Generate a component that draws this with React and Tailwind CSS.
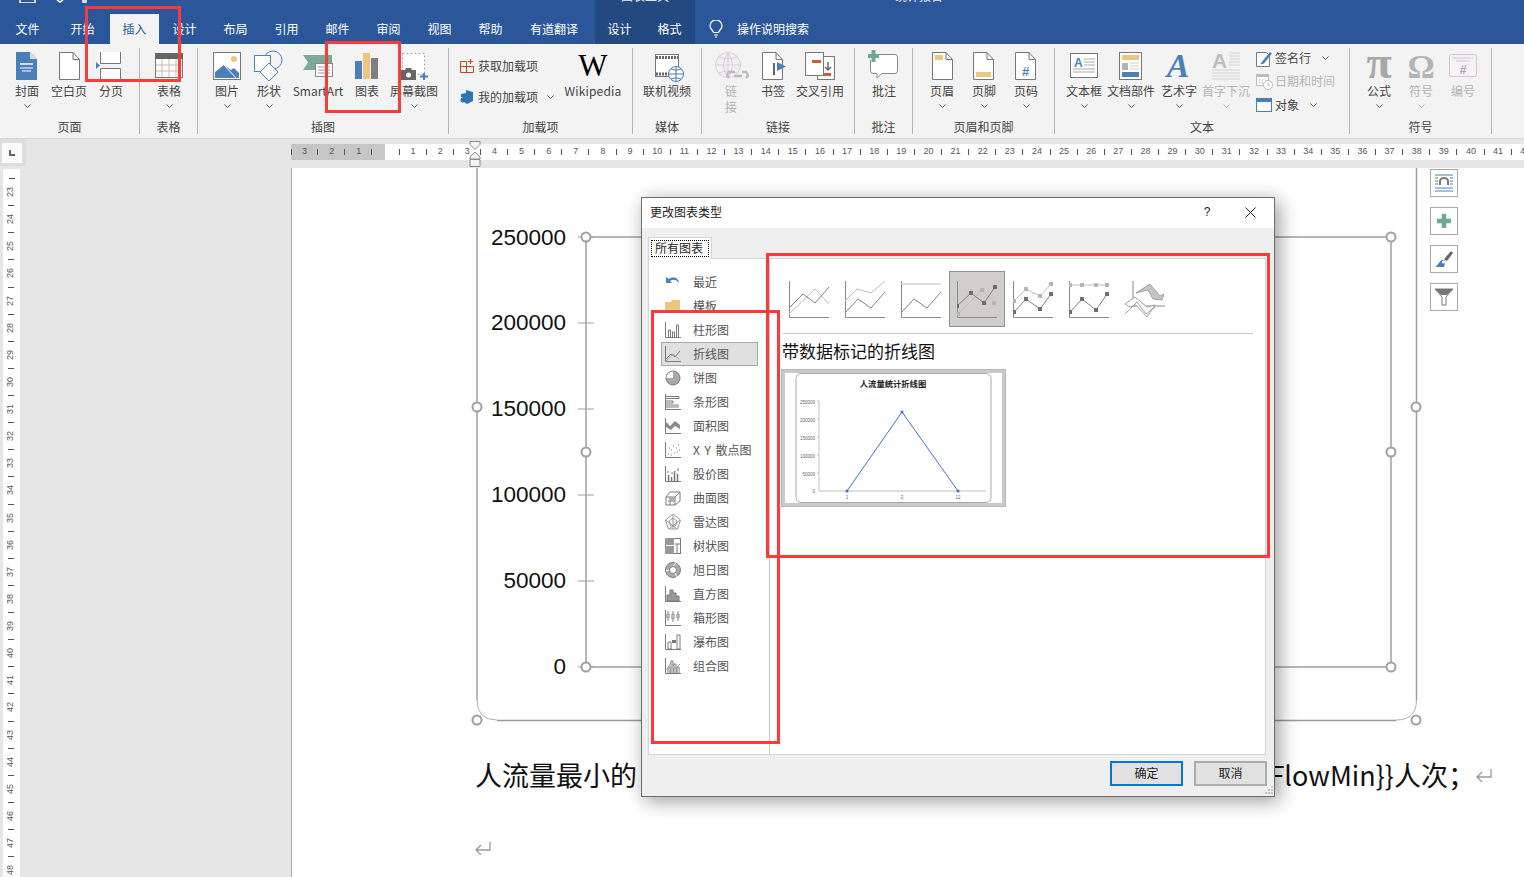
import React from 'react';

const BLUE = '#4a7fb8';
const YEL = '#ebc77f';
const RED = '#d9533a';
const GRN = '#6fa98f';

const Chev = ({ off }) => (
  <svg width="7" height="4" viewBox="0 0 7 4" className="shrink-0">
    <path d="M.5.5l3 3 3-3" fill="none" stroke={off ? '#bbb' : '#555'} strokeWidth="1" />
  </svg>
);

const Btn = ({ w, vb, label, off, chev, children }) => (
  <div className={`${w} flex flex-col items-center pt-px shrink-0`}>
    <svg viewBox={vb} className="w-full h-[34px] overflow-visible">{children}</svg>
    <div className={`text-center leading-[16px] whitespace-nowrap ${off ? 'text-[#b4b4b4]' : 'text-[#444]'}`}>{label}</div>
    {chev && <div className="h-[14px] flex items-center"><Chev off={off} /></div>}
  </div>
);

const Group = ({ w, pl, label, children }) => (
  <div className={`${w} h-[86px] flex flex-col border-r border-[#b5b5b5] shrink-0`}>
    <div className={`flex flex-1 ${pl}`}>{children}</div>
    <div className="h-[14px] leading-[14px] text-center text-[#444] whitespace-nowrap">{label}</div>
  </div>
);

const Doc = ({ x, w = 21 }) => (
  <path d={`M${x + .5} 52.5H${x + w - 7}L${x + w - .5} 59.5V79.5H${x + .5}ZM${x + w - 7} 52.5V59.5H${x + w - .5}`} fill="#fff" stroke="#777" />
);

const Ribbon = () => (
  <div className="h-[95px] pt-[4px] bg-[#f3f3f3] border-b border-[#d6d6d6] flex text-[12px]">
    <Group w="w-[140px]" pl="pl-[6px]" label="页面">
      <Btn w="w-[42px]" vb="6 49 42 34" label="封面" chev>
        <path d="M16 52H30L37 59V80H16Z" fill={BLUE} />
        <path d="M30 52V59H37Z" fill="#cfe0f0" />
        <path d="M20 63h13v2H20z" fill="#cfdcea" />
        <path d="M20 68h13M22 71h9" stroke="#fff" />
      </Btn>
      <Btn w="w-[42px]" vb="48 49 42 34" label="空白页"><Doc x={59} /></Btn>
      <Btn w="w-[42px]" vb="90 49 42 34" label="分页">
        <path d="M100.500 52V63.500H120.500V52M100.500 80V68.500H120.500V80" fill="#fff" stroke="#777" />
        <path d="M96 62l4 3.500-4 3.500z" fill={BLUE} />
      </Btn>
    </Group>
    <Group w="w-[58px]" pl="pl-[8px]" label="表格">
      <Btn w="w-[42px]" vb="148 49 42 34" label="表格" chev>
        <rect x="155.500" y="53.500" width="27" height="24" fill="#fff" stroke="#777" />
        <rect x="155" y="53" width="28" height="6" fill="#666" />
        <path d="M156 65h26M156 71h26M162 59v18M169 59v18M176 59v18" stroke="#c9b9a6" />
      </Btn>
    </Group>
    <Group w="w-[251px]" pl="pl-[8px]" label="插图">
      <Btn w="w-[42px]" vb="206 49 42 34" label="图片" chev>
        <rect x="213.500" y="52.500" width="27" height="27" fill="#fff" stroke="#777" />
        <circle cx="234" cy="59" r="3" fill={YEL} />
        <path d="M215 78V72L224 65 231 70 234 68 239 73V78Z" fill={BLUE} />
        <path d="M224 65L236 78" stroke="#fff" />
      </Btn>
      <Btn w="w-[42px]" vb="248 49 42 34" label="形状" chev>
        <circle cx="273" cy="60" r="9" fill="none" stroke={BLUE} />
        <rect x="254.500" y="55.500" width="16" height="16" fill="#fff" stroke={BLUE} />
        <path d="M269 63l9 9-9 9-9-9z" fill="#fff" stroke={BLUE} />
      </Btn>
      <Btn w="w-[56px]" vb="290 49 56 34" label="SmartArt">
        <path d="M303 55H332V70H303L308 62.500Z" fill="#7bab97" />
        <rect x="315.500" y="63.500" width="17" height="13" fill="#fff" stroke="#888" />
        <path d="M318 67h12M318 70h12M318 73h12" stroke="#999" />
      </Btn>
      <Btn w="w-[42px]" vb="346 49 42 34" label="图表">
        <rect x="355" y="61" width="7" height="18" fill={BLUE} />
        <rect x="363" y="53" width="7" height="26" fill={YEL} />
        <rect x="371" y="58" width="7" height="21" fill="#7f7f7f" />
      </Btn>
      <Btn w="w-[52px]" vb="388 49 52 34" label="屏幕截图" chev>
        <rect x="402.500" y="53.500" width="22" height="21" fill="#fff" stroke="#aaa" strokeDasharray="2 2" />
        <path d="M401 70h4l1-2h5l1 2h4v10h-15z" fill="#666" />
        <circle cx="408.500" cy="75" r="2.500" fill="#fff" />
        <path d="M424 73v7M420 76.500h8" stroke={BLUE} strokeWidth="2" />
      </Btn>
    </Group>
    <Group w="w-[184px]" pl="pl-[11px]" label="加载项">
      <div className="w-[104px] flex flex-col text-[#444]">
        <div className="h-[24px] mt-[6px] flex items-center">
          <svg width="16" height="16" viewBox="0 0 16 16" className="mr-[2px]">
            <path d="M.5 3.500h6v5h-6zM.5 8.500h6v6h-6zM6.500 8.500h7v6h-7z" fill="none" stroke="#cf3f1f" />
            <path d="M10.500 1v5M8 3.500h5" stroke="#cf3f1f" />
          </svg>
          <span>获取加载项</span>
        </div>
        <div className="h-[24px] mt-[7px] flex items-center">
          <svg width="16" height="16" viewBox="0 0 16 16" className="mr-[2px]">
            <path d="M6 1l7 2v9l-6 3-3-2V9L1 8V5l5-1z" fill="#2f74b8" />
            <circle cx="3" cy="11" r="2.500" fill="#2f74b8" />
          </svg>
          <span>我的加载项</span>
          <span className="ml-[9px]"><Chev /></span>
        </div>
      </div>
      <div className="w-[58px] flex flex-col items-center pt-px">
        <div className="h-[34px] leading-[34px] text-[31px] text-black [font-family:'Liberation_Serif',serif]">W</div>
        <div className="leading-[16px] text-[#444] tracking-[.2px]">Wikipedia</div>
      </div>
    </Group>
    <Group w="w-[69px]" pl="pl-[10px]" label="媒体">
      <Btn w="w-[48px]" vb="643 49 48 34" label="联机视频">
        <rect x="655.500" y="54.500" width="23" height="22" fill="#fff" stroke="#777" />
        <path d="M656 57.500h22M656 74h22" stroke="#666" strokeWidth="3" strokeDasharray="2 1" />
        <circle cx="676" cy="74" r="7.500" fill="#fff" stroke={BLUE} />
        <path d="M668.500 74h15M676 66.500v15M671 69q5 2.500 10 0M671 79q5-2.500 10 0" fill="none" stroke={BLUE} />
      </Btn>
    </Group>
    <Group w="w-[153px]" pl="pl-[11px]" label="链接">
      <Btn w="w-[36px]" vb="713 49 36 34" label={<>链<br />接</>} off>
        <circle cx="728" cy="65" r="12.500" fill="#f3f0f3" stroke="#d6d0d6" />
        <path d="M716 65h25M728 53v25M719 57q9 4 18 0M719 73q9-4 18 0M728 53q-9 12 0 25M728 53q9 12 0 25" fill="none" stroke="#d6d0d6" />
        <path d="M729 77a3.500 3.500 0 010-6h6M746 77a3.500 3.500 0 000-6h-4M734 75h8" transform="translate(0 1)" fill="none" stroke="#bdbdbd" strokeWidth="2.500" />
      </Btn>
      <Btn w="w-[48px]" vb="749 49 48 34" label="书签">
        <Doc x={762} />
        <path d="M774 63v12" stroke="#666" strokeWidth="2" />
        <path d="M777 62l9 4.500-9 4.500z" fill={BLUE} />
      </Btn>
      <Btn w="w-[46px]" vb="797 49 46 34" label="交叉引用">
        <rect x="817.500" y="56.500" width="17" height="23" fill="#fff" stroke="#777" />
        <rect x="805.500" y="52.500" width="18" height="23" fill="#fff" stroke="#777" />
        <rect x="812" y="60" width="9" height="3" fill={RED} />
        <rect x="824" y="73" width="7" height="3" fill={RED} />
        <path d="M828 62v8M825 67l3 3 3-3" fill="none" stroke="#666" strokeWidth="1.500" />
      </Btn>
    </Group>
    <Group w="w-[58px]" pl="pl-[8px]" label="批注">
      <Btn w="w-[42px]" vb="863 49 42 34" label="批注">
        <path d="M872 54.500H895Q897.500 54.500 897.500 57V71Q897.500 73.500 895 73.500H882L877 78V73.500H873Q870.500 73.500 870.500 71V60" fill="#fff" stroke="#888" />
        <path d="M873.500 50v12M868 56h11" stroke={GRN} strokeWidth="4" />
      </Btn>
    </Group>
    <Group w="w-[142px]" pl="pl-[8px]" label="页眉和页脚">
      <Btn w="w-[42px]" vb="921 49 42 34" label="页眉" chev>
        <Doc x={932} /><rect x="935" y="55" width="8" height="5" fill={YEL} />
      </Btn>
      <Btn w="w-[42px]" vb="963 49 42 34" label="页脚" chev>
        <Doc x={973} /><rect x="976" y="72" width="15" height="5" fill={YEL} />
      </Btn>
      <Btn w="w-[42px]" vb="1005 49 42 34" label="页码" chev>
        <Doc x={1015} />
        <text x="1025.500" y="76" textAnchor="middle" fontSize="13" fontWeight="700" fontFamily="Liberation Sans" fill={BLUE}>#</text>
      </Btn>
    </Group>
    <Group w="w-[295px]" pl="pl-[8px]" label="文本">
      <Btn w="w-[42px]" vb="1063 49 42 34" label="文本框" chev>
        <rect x="1070.500" y="53.500" width="27" height="24" fill="#fff" stroke="#777" />
        <text x="1074" y="67" fontSize="12" fontWeight="700" fontFamily="Liberation Sans" fill={BLUE}>A</text>
        <path d="M1084 59h11M1084 62h11M1084 65h11M1073 69h22M1073 72h22" stroke="#aaa" />
      </Btn>
      <Btn w="w-[52px]" vb="1105 49 52 34" label="文档部件" chev>
        <rect x="1119.500" y="52.500" width="22" height="27" fill="#fff" stroke="#777" />
        <rect x="1122" y="55" width="17" height="5" fill={YEL} />
        <rect x="1122" y="63" width="6" height="7" fill="#b5b5b5" />
        <path d="M1130 63h9M1130 66h9M1130 69h9" stroke="#ccc" />
        <rect x="1122" y="72" width="17" height="5" fill={BLUE} />
      </Btn>
      <Btn w="w-[44px]" vb="1157 49 44 34" label="艺术字" chev>
        <text x="1178" y="77" textAnchor="middle" fontSize="34" fontStyle="italic" fontWeight="700" fontFamily="Liberation Serif" fill={BLUE}>A</text>
      </Btn>
      <Btn w="w-[50px]" vb="1201 49 50 34" label="首字下沉" off chev>
        <text x="1212" y="68" fontSize="21" fontWeight="700" fontFamily="Liberation Sans" fill="#bdbdbd">A</text>
        <path d="M1229 53h11M1229 56h11M1229 59h11M1229 62h11M1229 65h11M1212 70h28M1212 73h28M1212 76h28M1212 79h28" stroke="#d4d4d4" />
      </Btn>
      <div className="ml-[5px] flex flex-col text-[#444]">
        <div className="h-[20px] flex items-center">
          <svg width="17" height="17" viewBox="0 0 17 17" className="mr-[2px]">
            <path d="M.5 2.500h10l3 3v11H.5z" fill="#fff" stroke="#777" />
            <path d="M5 13L14 2l2 1.500-8 10-3.500 1z" fill={BLUE} />
          </svg>
          <span>签名行</span>
          <span className="ml-[11px]"><Chev /></span>
        </div>
        <div className="h-[20px] mt-[3px] flex items-center text-[#b4b4b4]">
          <svg width="17" height="17" viewBox="0 0 17 17" className="mr-[2px]">
            <path d="M.5 1.500h12v11H.5z" fill="#fff" stroke="#bbb" />
            <rect x="0" y="1" width="13" height="3" fill="#bbb" />
            <path d="M3 7h1M6 7h1M9 7h1M3 10h1M6 10h1" stroke="#999" />
            <circle cx="12" cy="12" r="4.500" fill="#fff" stroke="#bbb" />
            <path d="M12 9.500V12h2" fill="none" stroke="#bbb" />
          </svg>
          <span>日期和时间</span>
        </div>
        <div className="h-[20px] mt-[4px] flex items-center">
          <svg width="17" height="15" viewBox="0 0 17 15" className="mr-[2px]">
            <rect x=".5" y=".5" width="15" height="13" fill="#fff" stroke={BLUE} />
            <rect x="0" y="0" width="16" height="4" fill={BLUE} />
          </svg>
          <span>对象</span>
          <span className="ml-[11px]"><Chev /></span>
        </div>
      </div>
    </Group>
    <Group w="w-[142px]" pl="pl-[8px]" label="符号">
      <Btn w="w-[42px]" vb="1358 49 42 34" label="公式" chev>
        <text x="1379" y="78" textAnchor="middle" fontSize="46" fontWeight="700" fontFamily="Liberation Serif" fill="#a8a8a8">π</text>
      </Btn>
      <Btn w="w-[42px]" vb="1400 49 42 34" label="符号" off chev>
        <text x="1421" y="78" textAnchor="middle" fontSize="34" fontWeight="700" fontFamily="Liberation Serif" fill="#b4b4b4">Ω</text>
      </Btn>
      <Btn w="w-[42px]" vb="1442 49 42 34" label="编号" off>
        <rect x="1449.500" y="54.500" width="27" height="22" rx="2" fill="#f6f2f6" stroke="#cfc9cf" />
        <path d="M1453 58h20M1456 61h14" stroke="#cfc9cf" />
        <text x="1463" y="74" textAnchor="middle" fontSize="12" fontWeight="700" fontFamily="Liberation Sans" fill="#aaa">#</text>
      </Btn>
    </Group>
  </div>
);

const Tab = ({ w, active, children }) => (
  <div className={`${w} h-[30px] leading-[30px] text-center text-[12px] ${active ? 'bg-[#f3f3f3] text-[#2b579a]' : 'text-white'}`}>{children}</div>
);

const TitleBar = () => (
  <div className="h-[44px] bg-[#2b579a] flex">
    <div className="w-[595px] flex flex-col">
      <div className="h-[14px] relative overflow-hidden">
        <svg width="100" height="3" viewBox="0 0 100 3" className="ml-[19px]">
          <path d="M1 0v3h15V0M64 0h3v2h-3zM38 0l3 2 3-2" fill="none" stroke="#fff" strokeWidth="1.500" />
        </svg>
      </div>
      <div className="flex">
        <Tab w="w-[55px]">文件</Tab>
        <Tab w="w-[55px]">开始</Tab>
        <Tab w="w-[49px]" active>插入</Tab>
        <Tab w="w-[51px]">设计</Tab>
        <Tab w="w-[51px]">布局</Tab>
        <Tab w="w-[51px]">引用</Tab>
        <Tab w="w-[51px]">邮件</Tab>
        <Tab w="w-[51px]">审阅</Tab>
        <Tab w="w-[51px]">视图</Tab>
        <Tab w="w-[51px]">帮助</Tab>
        <Tab w="w-[76px]">有道翻译</Tab>
      </div>
    </div>
    <div className="w-[100px] bg-[#224a80] flex flex-col">
      <div className="h-[14px]">
        <div className="h-[2px] overflow-hidden text-center text-[12px] leading-[13px] text-[#dfe6f0]"><div className="-mt-[11px]">图表工具</div></div>
      </div>
      <div className="flex">
        <Tab w="w-[49px]">设计</Tab>
        <Tab w="w-[51px]">格式</Tab>
      </div>
    </div>
    <div className="flex-1 flex flex-col">
      <div className="h-[14px]">
        <div className="h-[2px] ml-[200px] overflow-hidden text-[12px] leading-[13px] text-[#dfe6f0]"><div className="-mt-[11px]">统计报告</div></div>
      </div>
      <div className="h-[30px] flex items-center pl-[14px] text-white text-[12px]">
        <svg width="14" height="18" viewBox="0 0 14 18" className="mr-[14px]">
          <path d="M4.500 12.500C4 10 1 9 1 6a6 6 0 0112 0c0 3-3 4-3.500 6.500zM5 15h4M6 17h2" fill="none" stroke="#fff" strokeWidth="1.200" />
        </svg>
        <span>操作说明搜索</span>
      </div>
    </div>
  </div>
);

const hLabels = ['3', '2', '1', '', ...Array.from({ length: 42 }, (_, i) => String(i + 1))];
const vLabels = Array.from({ length: 26 }, (_, i) => String(i + 23));

const RulerRow = () => (
  <div className="h-[29px] bg-[#e6e6e6] flex">
    <div className="w-[26px] h-[27px] shrink-0 bg-[#dedede] pt-[4px] pl-[2px]">
      <div className="w-[20px] h-[20px] bg-[#fbfbfb] flex items-center justify-center">
        <div className="w-[6px] h-[6px] border-l-2 border-b-2 border-[#666]" />
      </div>
    </div>
    <div className="ml-[265px] flex-1 min-w-0 mt-[5px] h-[16px] relative bg-[linear-gradient(90deg,#c6c6c6_94px,#ffffff_94px)] flex">
      <div className="w-px h-[6px] bg-[#555] self-center shrink-0 -mr-px" />
      {hLabels.map((n, i) => (
        <div key={i} className="w-[27.13px] shrink-0 flex items-center text-[9px] text-[#555] [font-family:'Liberation_Sans',sans-serif]">
          <span className="flex-1 text-center pl-px">{n}</span>
          <span className="w-px h-[6px] bg-[#555]" />
        </div>
      ))}
      <svg width="12" height="28" viewBox="0 0 12 28" className="absolute left-[178px] -top-[3px]">
        <path d="M1 .5h10v3L6 8.500 1 3.500zM6 11l5 5v2H1v-2zM1 18.500h10v7H1z" fill="#f3f3f3" stroke="#8a8a8a" />
      </svg>
    </div>
  </div>
);

const VRuler = () => (
  <div className="ml-[3px] w-[17px] h-full bg-white overflow-hidden flex flex-col items-center mt-px">
    <div className="h-[10px] shrink-0 w-full flex flex-col items-center justify-end"><span className="w-[6px] h-px bg-[#555]" /></div>
    {vLabels.map((n) => (
      <div key={n} className="h-[27.13px] shrink-0 flex flex-col items-center text-[9px] text-[#555] [font-family:'Liberation_Sans',sans-serif]">
        <span className="flex-1 flex items-center -rotate-90">{n}</span>
        <span className="w-[6px] h-px bg-[#555]" />
      </div>
    ))}
  </div>
);

const Handle = ({ x, y }) => <circle cx={x} cy={y} r="4.500" fill="#fff" stroke="#a0a0a0" strokeWidth="2" />;

const Chart = () => (
  <svg viewBox="476 168 941 552" className="w-[941px] h-[552px] overflow-visible shrink-0">
    <path d="M477 168V700" fill="none" stroke="#a0a0a0" strokeWidth="1.500" />
    <path d="M1416.500 168V700" fill="none" stroke="#a0a0a0" strokeWidth="1.500" />
    <path d="M477 700Q477 720 497 720M1416.500 700Q1416.500 720 1396 720" fill="none" stroke="#b0b0b0" />
    <path d="M497 720.500H1396" stroke="#999" strokeWidth="1.500" />
    <rect x="586" y="237" width="805" height="430" fill="none" stroke="#a0a0a0" strokeWidth="1.500" />
    {[237, 323, 409, 495, 581, 667].map((y) => (
      <path key={y} d={`M578 ${y}H594`} stroke="#a0a0a0" />
    ))}
    {[['250000', 245], ['200000', 330], ['150000', 416], ['100000', 502], ['50000', 588], ['0', 674]].map(([t, y]) => (
      <text key={t} x="566" y={y} textAnchor="end" fontSize="22.500" fontFamily="Liberation Sans" fill="#111">{t}</text>
    ))}
    <Handle x={586} y={237} /><Handle x={1391} y={237} /><Handle x={586} y={452} /><Handle x={1391} y={452} />
    <Handle x={586} y={667} /><Handle x={1391} y={667} />
    <Handle x={477} y={407} /><Handle x={1416} y={407} /><Handle x={477} y={720} /><Handle x={1416} y={720} />
  </svg>
);

const Tool = ({ children }) => (
  <div className="w-[28px] h-[28px] bg-white border border-[#aaa] flex items-center justify-center">
    <svg width="20" height="20" viewBox="0 0 20 20">{children}</svg>
  </div>
);

const Return = () => (
  <svg width="16" height="13" viewBox="0 0 16 13" className="shrink-0">
    <path d="M15 0v8H1M6 3L1 8l5 5" fill="none" stroke="#999" strokeWidth="1.300" />
  </svg>
);

const Page = () => (
  <div className="flex-1 bg-white border-l border-[#aaa] pl-[183px] flex flex-col h-full">
    <div className="flex">
      <div className="ml-px"><Chart /></div>
      <div className="ml-[13px] mt-px flex flex-col gap-[10px]">
        <Tool>
          <path d="M1 2h18M1 15h18M1 18h18M1 5h3M16 5h3M1 8h3M16 8h3M1 11h3M16 11h3" stroke={BLUE} />
          <path d="M5 12V8a5 4 0 0110 0v4h-2V8a3 2 0 00-6 0v4z" fill="#777" />
        </Tool>
        <Tool><path d="M10 3v14M3 10h14" stroke={GRN} strokeWidth="4.500" /></Tool>
        <Tool>
          <path d="M10 10l7-8 2 2-6 8z" fill="#666" />
          <path d="M1 18c3-1 4-6 7-7 2-1 4 1 3 3l-1 4z" fill={BLUE} />
          <circle cx="9.500" cy="13" r="1.500" fill="#fff" />
        </Tool>
        <Tool>
          <path d="M1 2h18L12 10v8H8v-8z" fill="#fff" stroke="#777" />
          <path d="M1 2h18l-6 6H7z" fill="#777" />
        </Tool>
      </div>
    </div>
    <div className="h-[40px] mt-[35px] w-[1017px] flex items-center justify-between text-[27px] leading-[40px] text-[#111]">
      <span>人流量最小的</span>
      <span className="flex items-center whitespace-nowrap">
        <span>FlowMin{'}}'}人次；</span>
        <span className="ml-[1px]"><Return /></span>
      </span>
    </div>
    <div className="mt-[47px]"><Return /></div>
  </div>
);

const axes = 'M.5 0V36.500H40';
const pts = (a) => a.map((p) => p.join(',')).join(' ');

const LineIcon = ({ dark, light, marks }) => (
  <svg width="40" height="37" viewBox="0 0 40 37">
    <path d={axes} fill="none" stroke="#8a8a8a" />
    <polyline points={pts(light)} fill="none" stroke="#bdbdbd" />
    <polyline points={pts(dark)} fill="none" stroke="#808080" />
    {marks && light.map(([x, y], i) => <rect key={i} x={x - 2} y={y - 2} width="4" height="4" fill="#b5b5b5" />)}
    {marks && dark.map(([x, y], i) => <rect key={i} x={x - 2} y={y - 2} width="4" height="4" fill="#6f6f6f" />)}
  </svg>
);

const Tile = ({ active, children }) => (
  <div className={`w-[56px] h-[56px] flex items-center justify-center ${active ? 'bg-[#d0cfcd] border border-[#8f8f8f]' : ''}`}>{children}</div>
);

const TypeRow = () => (
  <div className="flex">
    <Tile><LineIcon dark={[[0, 27], [14, 13], [26, 22], [40, 6]]} light={[[0, 33], [26, 8], [40, 23]]} /></Tile>
    <Tile><LineIcon dark={[[0, 32], [13, 18], [26, 27], [40, 11]]} light={[[0, 20], [12, 8], [26, 12], [40, 0]]} /></Tile>
    <Tile><LineIcon dark={[[0, 32], [13, 18], [26, 27], [40, 11]]} light={[[0, 3], [40, 3]]} /></Tile>
    <Tile active><LineIcon marks dark={[[0, 25], [14, 12], [27, 22], [38, 6]]} light={[[1, 33], [25, 9], [37, 22]]} /></Tile>
    <Tile><LineIcon marks dark={[[1, 31], [13, 18], [27, 28], [38, 13]]} light={[[1, 20], [13, 8], [27, 15], [38, 3]]} /></Tile>
    <Tile><LineIcon marks dark={[[1, 31], [13, 18], [27, 29], [38, 13]]} light={[[1, 4], [13, 4], [27, 4], [38, 4]]} /></Tile>
    <Tile>
      <svg width="40" height="37" viewBox="0 0 40 37">
        <path d="M8 0V25H40" fill="none" stroke="#8a8a8a" />
        <path d="M11 12L25 3 35 15 39 13 37 19 28 18 23 9Z" fill="#c4c4c4" stroke="#a0a0a0" />
        <path d="M0 23L10 16 22 26 30 24 22 36 11 24 5 26Z" fill="#fff" stroke="#a0a0a0" />
        <path d="M0 33L12 21 21 33 30 26" fill="none" stroke="#a0a0a0" />
      </svg>
    </Tile>
  </div>
);

const Preview = () => (
  <svg viewBox="781 369 225 138" className="w-[225px] h-[138px]">
    <rect x="781" y="369" width="225" height="138" fill="#c9c9c9" stroke="#a8a8a8" />
    <rect x="785" y="373" width="217" height="130" fill="#fff" />
    <rect x="796" y="373.500" width="195" height="129" rx="5" fill="#fff" stroke="#a8a8a8" />
    <text x="893" y="387" textAnchor="middle" fontSize="8.300" fontWeight="700" fontFamily="Noto Sans CJK SC" fill="#222">人流量统计折线图</text>
    <path d="M819 401V491H986" fill="none" stroke="#c0c0c0" />
    {[401, 419, 437, 455, 473].map((y) => <path key={y} d={`M817 ${y}H819`} stroke="#c0c0c0" />)}
    {[['250000', 404], ['200000', 422], ['150000', 440], ['100000', 458], ['50000', 476], ['0', 493]].map(([t, y]) => (
      <text key={t} x="815" y={y} textAnchor="end" fontSize="4.500" fontFamily="Liberation Sans" fill="#666">{t}</text>
    ))}
    {[['1', 847], ['2', 902], ['12', 958]].map(([t, x]) => (
      <text key={t} x={x} y="499" textAnchor="middle" fontSize="4.500" fontFamily="Liberation Sans" fill="#666">{t}</text>
    ))}
    <polyline points="847,491 902,412 958,491" fill="none" stroke="#4472c4" />
    {[[847, 491], [902, 412], [958, 491]].map(([x, y]) => <circle key={x} cx={x} cy={y} r="1.500" fill="#4472c4" />)}
  </svg>
);

const s = { fill: 'none', stroke: '#7a7a7a' };
const ax = <path d="M.5 0V15.500H16" {...s} />;
const navItems = [
  ['最近', <path d="M1 3v6h6L5 7c3-2 6-2 9 2 0-5-6-7-10-4z" fill={BLUE} />],
  ['模板', <path d="M0 4h6l1-2h8v12H0z" fill={YEL} />],
  ['柱形图', <g>{ax}<path d="M3.500 15V8h2v7M7.500 15V10h2v5M11.500 15V3h2v12" {...s} /></g>],
  ['折线图', <g>{ax}<path d="M1 13l5-5 4 3 5-6" {...s} /><path d="M1 15l7-7 6 5" fill="none" stroke="#aaa" /></g>],
  ['饼图', <g><circle cx="8" cy="8" r="7" fill="#a8a8a8" stroke="#7a7a7a" /><path d="M8 8V1.500A6.500 6.500 0 001.500 8z" fill="#fff" /></g>],
  ['条形图', <g><path d="M.5 0V16" {...s} /><path d="M1 2.500h13M1 4.500h13V2.500M1 7h7v2H1M1 11h12v2H1" {...s} /><path d="M1 15.500h15" {...s} /></g>],
  ['面积图', <g>{ax}<path d="M1 4l4 4 5-5 5 4v4l-5-3-4 4-5-3z" fill="#8a8a8a" /></g>],
  ['X Y 散点图', <g>{ax}<path d="M3 12h1M6 8h1M4 6h1M9 11h1M11 6h1M13 3h1M8 4h1M12 10h1M6 13h1M14 8h1" stroke="#777" strokeDasharray="1 1" /></g>],
  ['股价图', <g>{ax}<path d="M3.500 9v6M6.500 11v4M9.500 5v10M12.500 8v7" stroke="#777" strokeWidth="1.500" /><path d="M3 5v2M7 6v2M13 2v3" stroke="#777" /></g>],
  ['曲面图', <g><path d="M1 7l4-5h10v9l-5 4H1z" {...s} /><path d="M1 7h9v8M10 7l5-5M3 11h7M5 7v8" {...s} /><path d="M3 11l3-3h5l-2 3z" fill="#aaa" /></g>],
  ['雷达图', <g><path d="M8 0l7.500 6-3 9h-9l-3-9zM8 4l4 3-1.500 5h-5L4 7zM8 0v15M1 6l11 9M15 6L4 15" fill="none" stroke="#999" /></g>],
  ['树状图', <g><rect x=".5" y=".5" width="15" height="15" fill="#fff" stroke="#7a7a7a" /><path d="M0 0h9v7H0zM0 8h9v8H0z" fill="#999" /><path d="M10 6h6M12 6v10" stroke="#7a7a7a" /></g>],
  ['旭日图', <g><circle cx="8" cy="8" r="7.500" fill="#aaa" stroke="#7a7a7a" /><circle cx="8" cy="8" r="3.500" fill="#fff" stroke="#7a7a7a" /><path d="M8 4L11 1M4 8L1 9M10 11l2 4" stroke="#fff" /></g>],
  ['直方图', <g>{ax}<path d="M2 15V9h3V4h3v3h3v3h3v5z" fill="#999" stroke="#7a7a7a" /></g>],
  ['箱形图', <g>{ax}<path d="M3 1v2M3 9v2M8 1v2M8 10v2M13 1v2M13 9v2" stroke="#7a7a7a" /><path d="M2 4h2v4H2zM7 4h2v5H7zM12 4h2v4h-2z" {...s} /></g>],
  ['瀑布图', <g>{ax}<path d="M3 8h3v7H3zM12 1h3v14h-3z" {...s} /><path d="M7 6h4v3H7z" fill="#777" /></g>],
  ['组合图', <g>{ax}<path d="M3 15V9h2v6M6 15V3h2v12M9 15V6h2v9M12 15V9h2v6" {...s} /><path d="M1 12l5-7 4 6 5-5" fill="none" stroke="#aaa" /></g>],
];

const Nav = () => (
  <div className="w-[121px] h-full border-r border-[#c8c8c8] pt-[11px] pl-[12px] shrink-0">
    {navItems.map(([label, icon]) => {
      const on = label === '折线图';
      return (
        <div key={label} className={`w-[97px] h-[24px] flex items-center text-[12px] text-[#555] whitespace-nowrap [word-spacing:2px] ${on ? 'bg-[#e0e0e0] border border-[#a9a9a9] pl-[3px]' : 'pl-[4px]'}`}>
          <svg width="16" height="16" viewBox="0 0 16 16" className="mr-[12px] shrink-0">{icon}</svg>
          {label}
        </div>
      );
    })}
  </div>
);

const Dialog = () => (
  <div className="absolute left-[641px] top-[197px] w-[634px] h-[600px] bg-[#efefef] border border-[#6e6e6e] shadow-[4px_4px_18px_rgba(0,0,0,0.4)] flex flex-col text-[12px] text-[#222]">
    <div className="h-[30px] bg-white flex items-center pl-[8px] pb-[2px] shrink-0">
      <span className="flex-1">更改图表类型</span>
      <span className="w-[14px] text-center mr-[31px] [font-family:'Liberation_Sans',sans-serif]">?</span>
      <svg width="11" height="11" viewBox="0 0 11 11" className="mr-[18px]"><path d="M.5.5l10 10M10.500.5l-10 10" stroke="#222" /></svg>
    </div>
    <div className="mt-[9px] ml-[6px] w-[64px] h-[22px] bg-white border border-b-0 border-[#d4d4d4] pt-[2px] pl-[2px] -mb-px relative shrink-0">
      <div className="w-[58px] h-[17px] leading-[13px] text-left pl-[3px] border border-dotted border-black">所有图表</div>
    </div>
    <div className="ml-[6px] w-[618px] h-[497px] bg-white border border-[#d4d4d4] flex shrink-0">
      <Nav />
      <div className="pt-[12px] pl-[11px]">
        <TypeRow />
        <div className="mt-[6px] ml-[2px] w-[470px] h-px bg-[#c8c8c8]" />
        <div className="mt-[5px] h-[24px] leading-[24px] text-[17px] text-[#111] ml-px">带数据标记的折线图</div>
        <div className="mt-[6px]"><Preview /></div>
      </div>
    </div>
    <div className="mt-[6px] pr-[7px] flex justify-end gap-[11px]">
      <div className="w-[73px] h-[25px] leading-[19px] text-center bg-[#e1e1e1] border-2 border-[#0078d7]">确定</div>
      <div className="w-[73px] h-[25px] leading-[19px] text-center bg-[#e1e1e1] border-2 border-[#adadad]">取消</div>
    </div>
    <svg width="9" height="9" viewBox="0 0 9 9" className="absolute right-px bottom-px">
      <path d="M7 0h2v2H7zM4 3h2v2H4zM7 3h2v2H7zM1 6h2v2H1zM4 6h2v2H4zM7 6h2v2H7z" fill="#c4c4c4" />
    </svg>
  </div>
);

export default function App() {
  return (
    <div className="relative w-[1524px] h-[877px] overflow-hidden bg-[#e6e6e6] [font-family:'Noto_Sans_CJK_SC','Liberation_Sans',sans-serif]">
      <TitleBar />
      <Ribbon />
      <RulerRow />
      <div className="h-[709px] flex">
        <div className="w-[291px] h-full shrink-0"><VRuler /></div>
        <Page />
      </div>
      <Dialog />
      {/* red marks someone drew on the screenshot */}
      <div className="absolute left-[85px] top-[6px] w-[96px] h-[76px] border-[3px] border-[#fb3a3a]" />
      <div className="absolute left-[325px] top-[41px] w-[76px] h-[72px] border-[3px] border-[#fb3a3a]" />
      <div className="absolute left-[766px] top-[253px] w-[504px] h-[305px] border-[3px] border-[#fb3a3a]" />
      <div className="absolute left-[651px] top-[310px] w-[129px] h-[434px] border-[3px] border-[#fb3a3a]" />
    </div>
  );
}
